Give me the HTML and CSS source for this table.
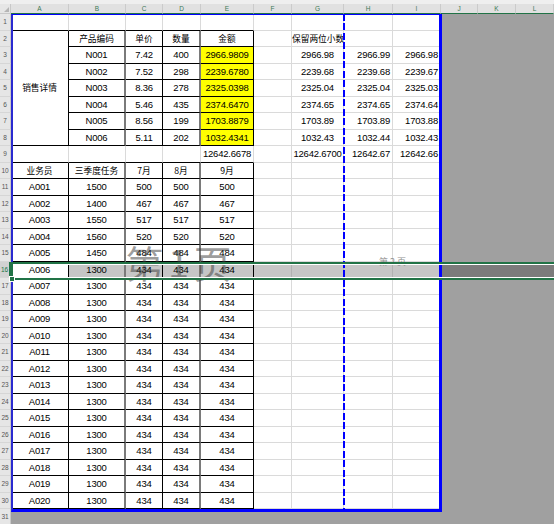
FILE: index.html
```html
<!DOCTYPE html>
<html lang="zh-CN">
<head>
<meta charset="utf-8">
<title>销售详情 - 分页预览</title>
<link rel="stylesheet" href="styles.css">
</head>
<body>
<div class="app">
  <div class="topstrip"></div>
  <div class="stack">
    <div class="sheet" id="sheet"></div>
    <div class="overlay" aria-hidden="true">
      <div class="frame"></div>
      <div class="pbreak"></div>
      <div class="selband"></div>
      <div class="wm wm1">第 1 页</div>
      <div class="wm wm2">第 2 页</div>
    </div>
  </div>
</div>
<script src="script.js"></script>
</body>
</html>
```

FILE: styles.css
```css
html, body {
  margin: 0;
  padding: 0;
  background: #fff;
  overflow: hidden;
}
body {
  width: 554px;
  height: 524px;
  font-family: "Liberation Sans", "Noto Sans CJK SC", sans-serif;
}
.app {
  display: flex;
  flex-direction: column;
  width: 554px;
  height: 524px;
  overflow: hidden;
}
.topstrip {
  flex: none;
  height: 4px;
  background: #efefef;
}
.stack {
  flex: none;
  display: grid;
}
.sheet, .overlay {
  grid-area: 1 / 1;
  display: grid;
  grid-template-columns: 11px 58px 57px 37px 38px 53px 38px 52px 49px 48px 37px 38px 38px;
  grid-template-rows: 10px repeat(31, 16.5px);
}
.overlay { pointer-events: none; }

.corner {
  position: relative;
  box-sizing: border-box;
  background: #e6e6e6;
  border-right: 1px solid #c8c8c8;
  border-bottom: 1px solid #c8c8c8;
}
.corner::after {
  content: "";
  position: absolute;
  right: 1px;
  bottom: 1px;
  border-left: 5px solid transparent;
  border-bottom: 5px solid #b5b5b5;
}
.ch {
  box-sizing: border-box;
  background: #e1e1e1;
  border-right: 1px solid #cbcbcb;
  border-bottom: 1px solid #217346;
  font-size: 6.5px;
  color: #3d7a56;
  display: flex;
  align-items: center;
  justify-content: center;
}
.rh {
  box-sizing: border-box;
  background: #e6e6e6;
  border-right: 1px solid #c8c8c8;
  border-bottom: 1px solid #d6d6d6;
  font-size: 6.5px;
  color: #555;
  display: flex;
  align-items: center;
  justify-content: center;
}
.rh-sel {
  background: #d2d2d2;
  color: #217346;
  border-right: 2px solid #217346;
}

.c {
  box-sizing: border-box;
  min-width: 0;
  border-right: 1px solid #dadada;
  border-bottom: 1px solid #dadada;
  display: flex;
  align-items: center;
  justify-content: center;
  font-size: 9.5px;
  letter-spacing: -0.2px;
  color: #000;
  white-space: nowrap;
}
.cn {
  font-family: "Noto Sans CJK SC", sans-serif;
  font-size: 8.7px;
  letter-spacing: 0;
}
.t { border-right-color: #000; border-bottom-color: #000; }
.tb { border-bottom-color: #000; }
.gb { border-right: 2px solid #7a7a7a; }
.y { background: #ffff00; }
.l { justify-content: flex-start; overflow: visible; }
.r { justify-content: flex-end; padding-right: 2px; }
.merge { grid-row: span 7; }
.sel { background: #c6c6c6; border-right-color: #b2b2b2; }
.sel.t { border-right-color: #000; }
.sel.gb { border-right-color: #7a7a7a; }
.out { background: #a0a0a0; border: none; }
.out-sel { background: #7b7b7b; }

.frame {
  grid-column: 2 / 11;
  grid-row: 2 / 32;
  border-style: solid;
  border-color: #0000ff;
  border-left-color: #2a2ad0;
  border-width: 1px 3px 3px 2px;
  margin: 0 -1px -3px 0;
}
.pbreak {
  grid-column: 8;
  grid-row: 2 / 32;
  justify-self: end;
  width: 2px;
  margin-right: -1px;
  margin-bottom: -1px;
  background: repeating-linear-gradient(to bottom, #0000ff 0 7px, transparent 7px 9.5px);
}
.selband {
  position: relative;
  grid-column: 2 / -1;
  grid-row: 17;
  margin-bottom: -2px;
  border-top: 2px solid #217346;
  border-bottom: 2px solid #217346;
  border-left: 2px solid #217346;
  box-shadow: inset 0 1px 0 #fff, inset 0 -1px 0 #fff;
}
.selband::after {
  content: "";
  position: absolute;
  left: -4px;
  bottom: -4px;
  width: 4px;
  height: 4px;
  background: #217346;
  border: 1px solid #fff;
}
.wm {
  grid-row: 2 / 32;
  display: flex;
  align-items: center;
  justify-content: center;
  font-family: "Noto Sans CJK SC", sans-serif;
  line-height: 1;
  white-space: nowrap;
}
.wm1 {
  grid-column: 2 / 9;
  font-size: 38px;
  letter-spacing: -2px;
  color: rgba(60, 60, 60, 0.5);
}
.wm2 {
  grid-column: 9 / 11;
  font-size: 9px;
  color: #8f8f8f;
}
```

FILE: script.js
```js
(function () {
  var sheet = document.getElementById('sheet');
  var letters = 'ABCDEFGHIJKL'.split('');
  var CJK = /[\u3400-\u9fff]/;

  function add(cls, text) {
    var d = document.createElement('div');
    d.className = cls;
    if (text) {
      d.textContent = text;
      if (CJK.test(text)) d.className += ' cn';
    }
    sheet.appendChild(d);
  }

  var prod = [
    ['N001', '7.42', '400', '2966.9809', '2966.98', '2966.99', '2966.98'],
    ['N002', '7.52', '298', '2239.6780', '2239.68', '2239.68', '2239.67'],
    ['N003', '8.36', '278', '2325.0398', '2325.04', '2325.04', '2325.03'],
    ['N004', '5.46', '435', '2374.6470', '2374.65', '2374.65', '2374.64'],
    ['N005', '8.56', '199', '1703.8879', '1703.89', '1703.89', '1703.88'],
    ['N006', '5.11', '202', '1032.4341', '1032.43', '1032.44', '1032.43']
  ];

  var staff = [['业务员', '三季度任务', '7月', '8月', '9月']];
  [['A001', '1500', '500'], ['A002', '1400', '467'], ['A003', '1550', '517'],
   ['A004', '1560', '520'], ['A005', '1450', '484']].forEach(function (x) {
    staff.push([x[0], x[1], x[2], x[2], x[2]]);
  });
  for (var i = 6; i <= 20; i++) {
    staff.push(['A0' + (i < 10 ? '0' : '') + i, '1300', '434', '434', '434']);
  }

  add('corner');
  letters.forEach(function (l) { add('ch', l); });

  for (var r = 1; r <= 31; r++) {
    add(r === 16 ? 'rh rh-sel' : 'rh', String(r));
    if (r === 31) {
      letters.forEach(function () { add('c out'); });
      continue;
    }
    var row;
    if (r === 1) {
      row = [['tb'], ['tb'], ['tb'], ['tb'], ['tb'], [''], [''], [''], ['']];
    } else if (r === 2) {
      row = [['t merge', '销售详情'], ['t gb', '产品编码'], ['t', '单价'], ['t gb', '数量'], ['t', '金额'],
             [''], ['l', '保留两位小数'], [''], ['']];
    } else if (r <= 8) {
      var p = prod[r - 3];
      row = [null, ['t gb', p[0]], ['t', p[1]], ['t gb', p[2]], ['t y', p[3]],
             [''], ['', p[4]], ['r', p[5]], ['r', p[6]]];
    } else if (r === 9) {
      row = [['tb'], ['tb'], ['tb'], ['tb'], ['tb', '12642.6678'],
             [''], ['', '12642.6700'], ['r', '12642.67'], ['r', '12642.66']];
    } else {
      var s = staff[r - 10];
      row = [['t', s[0]], ['t gb', s[1]], ['t', s[2]], ['t gb', s[3]], ['t', s[4]],
             [''], [''], [''], ['']];
    }
    row.forEach(function (c, idx) {
      if (!c) return;
      var cls = 'c' + (c[0] ? ' ' + c[0] : '');
      if (r === 16 && idx > 0) cls += ' sel';
      add(cls, c[1]);
    });
    for (var j = 0; j < 3; j++) add(r === 16 ? 'c out out-sel' : 'c out');
  }
})();
```
